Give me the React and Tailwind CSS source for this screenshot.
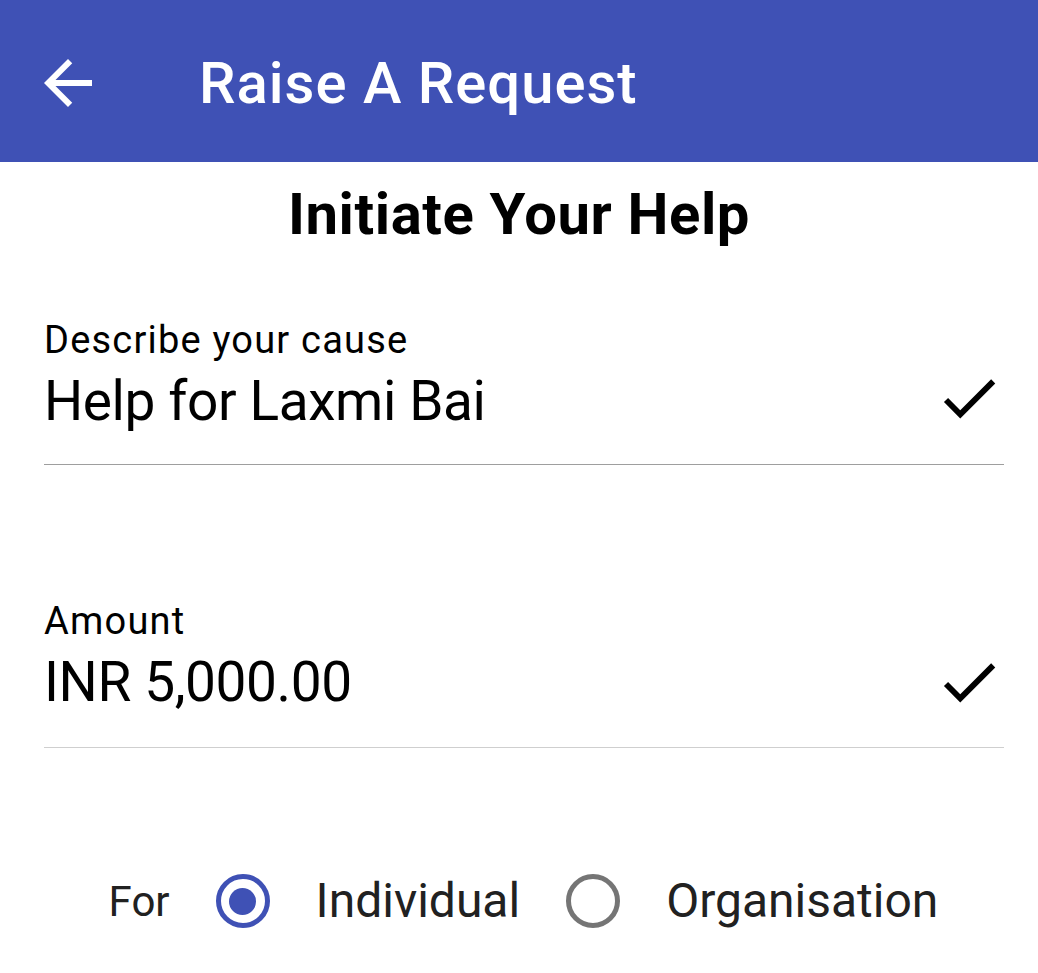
import React from 'react';

const font = { fontFamily: 'Roboto, "Noto Sans", sans-serif' };

const BackArrow = () => (
  <svg viewBox="0 0 24 24" className="w-[72px] h-[72px] fill-white shrink-0">
    <path d="M20 11H7.83l5.59-5.59L12 4l-8 8 8 8 1.41-1.41L7.83 13H20v-2z" />
  </svg>
);

const Check = () => (
  <svg viewBox="0 0 24 24" className="w-[70px] h-[70px] fill-black shrink-0">
    <path d="M9 16.17L4.83 12l-1.42 1.41L9 19 21 7l-1.41-1.41z" />
  </svg>
);

const Field = ({ label, value, lineClass, className = '', checkClass = '', lineGap = 'mt-[28px]' }) => (
  <div className={`ml-[44px] mr-[34px] ${className}`}>
    <div className="text-[38px] leading-[44px] tracking-[1.2px] text-black">{label}</div>
    <div className="flex items-start justify-between mt-[1px]">
      <span className="mt-[3px] text-[55px] leading-[70px] tracking-[-0.4px] text-black">{value}</span>
      <div className={checkClass}>
        <Check />
      </div>
    </div>
    <div className={`${lineGap} h-px ${lineClass}`} />
  </div>
);

const Radio = ({ checked }) =>
  checked ? (
    <div className="w-[54px] h-[54px] rounded-full border-[5px] border-[#3f51b5] flex items-center justify-center shrink-0">
      <div className="w-[27px] h-[27px] rounded-full bg-[#3f51b5]" />
    </div>
  ) : (
    <div className="w-[54px] h-[54px] rounded-full border-[5px] border-[#757575] shrink-0" />
  );

export default function App() {
  return (
    <div className="w-[1038px] h-[973px] bg-white overflow-hidden" style={font}>
      <header className="h-[162px] bg-[#3f51b5] flex items-center pl-[32px] pt-[4px]">
        <BackArrow />
        <h1 className="ml-[95px] text-[58px] leading-[64px] tracking-[1px] font-medium text-white">
          Raise A Request
        </h1>
      </header>

      <h2 className="mt-[20px] text-center text-[58px] leading-[64px] tracking-[0.6px] font-bold text-black">
        Initiate Your Help
      </h2>

      <Field
        className="mt-[72px]"
        label="Describe your cause"
        value="Help for Laxmi Bai"
        lineClass="bg-[#9e9e9e]"
      />
      <Field
        className="mt-[134px]"
        label="Amount"
        value="INR 5,000.00"
        checkClass="mt-[3px]"
        lineGap="mt-[30px]"
        lineClass="bg-[#cfcfcf]"
      />

      <div className="mt-[125px] pl-[9px] flex items-center justify-center gap-[46px] leading-[54px] text-[#212121]">
        <span className="text-[42px] mt-[2px]">For</span>
        <Radio checked />
        <span className="text-[48px]">Individual</span>
        <Radio />
        <span className="text-[48px]">Organisation</span>
      </div>
    </div>
  );
}
